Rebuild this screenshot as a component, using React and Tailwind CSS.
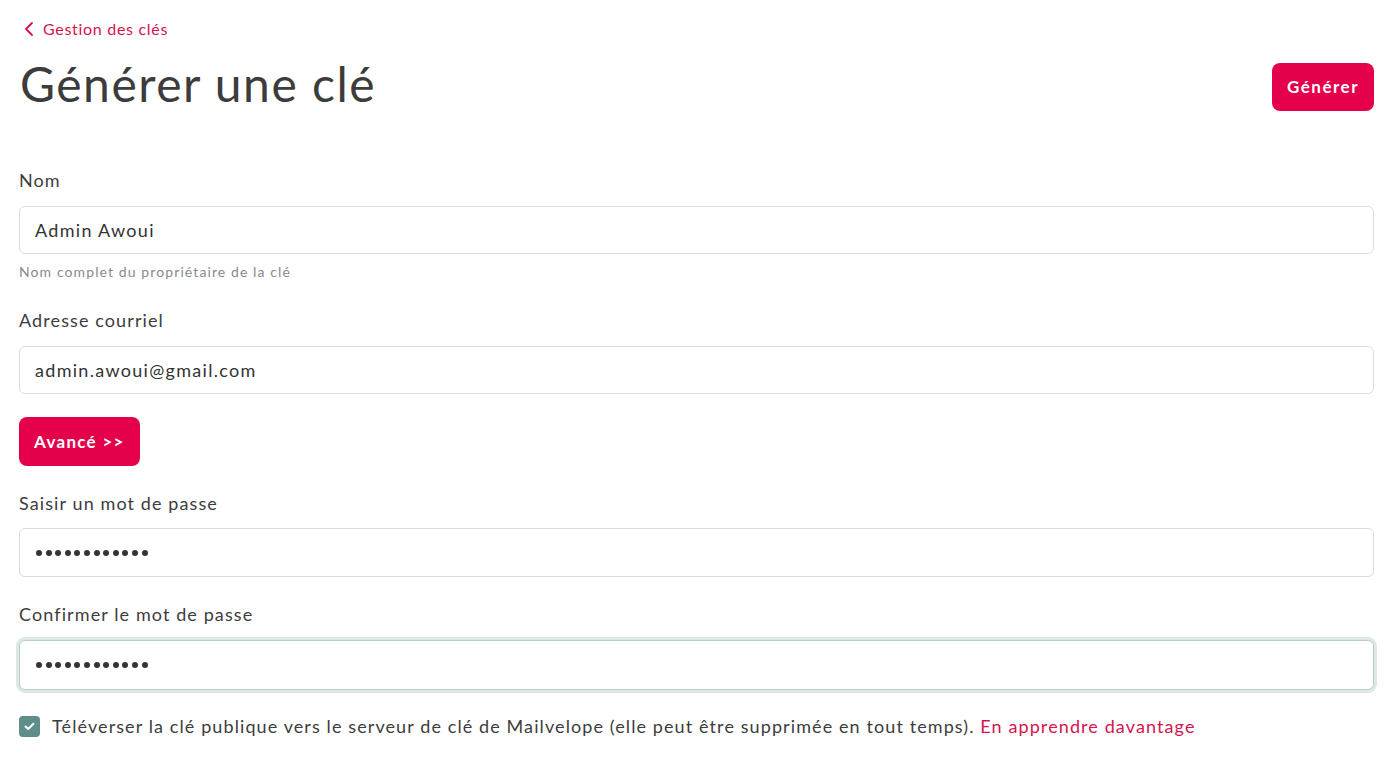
import React from "react";

const F = { fontFamily: "Lato, 'Noto Sans', sans-serif" };

function Label({ children, className = "" }) {
  return (
    <div className={"text-[18px] leading-[24px] text-[#3d3d3d] tracking-[1.1px] " + className}>{children}</div>
  );
}

function Input({ value, focus = false, password = false, className = "" }) {
  return (
    <div
      className={
        "h-[48px] rounded-[6px] bg-white flex items-center px-[15px] " +
        (focus
          ? "border border-[#b9cfcd] shadow-[0_0_0_3px_#dde8e6] "
          : "border border-[#dcdcdc] ") +
        className
      }
    >
      {password ? (
        <span className="flex gap-[3.6px] items-center pl-[1px]">
          {Array.from({ length: 12 }).map((_, i) => (
            <span key={i} className="w-[6px] h-[6px] rounded-full bg-[#333]" />
          ))}
        </span>
      ) : (
        <span className="text-[18px] text-[#333] tracking-[1.3px]">{value}</span>
      )}
    </div>
  );
}

export default function App() {
  return (
    <div style={F} className="min-h-[758px] bg-white pl-[19px] pr-[26px] pt-[18px]">
      <a className="flex items-center h-[22px] gap-[8px] text-[#d5134f] text-[16px] tracking-[0.7px] pl-[4px]">
        <svg width="12" height="16" viewBox="0 0 12 16" fill="none">
          <path d="M9 2 L3 8 L9 14" stroke="#d5134f" strokeWidth="1.8" strokeLinecap="round" strokeLinejoin="round" />
        </svg>
        <span>Gestion des clés</span>
      </a>
      <div className="mt-[23px] flex items-center justify-between h-[48px]">
        <h1 className="text-[48px] leading-[48px] text-[#3c3c3c] font-normal tracking-[1.5px] pl-[1px] -mt-[7px]">Générer une clé</h1>
        <button className="h-[48px] px-[15px] rounded-[8px] bg-[#e4004b] text-white text-[17px] font-bold tracking-[1.5px]">
          Générer
        </button>
      </div>

      <Label className="mt-[57px]">Nom</Label>
      <Input value="Admin Awoui" className="mt-[14px]" />
      <div className="mt-[8px] text-[14px] leading-[20px] text-[#8a8a8a] tracking-[1.1px]">Nom complet du propriétaire de la clé</div>

      <Label className="mt-[26px]">Adresse courriel</Label>
      <Input value="admin.awoui@gmail.com" className="mt-[14px]" />

      <button className="mt-[23px] h-[49px] px-[15px] rounded-[8px] bg-[#e4004b] text-white text-[17px] font-bold tracking-[1.3px]">
        Avancé &gt;&gt;
      </button>

      <Label className="mt-[25px]">Saisir un mot de passe</Label>
      <Input password className="mt-[13px] h-[49px]" />

      <Label className="mt-[25px]">Confirmer le mot de passe</Label>
      <Input password focus className="mt-[14px] h-[50px]" />

      <div className="mt-[24px] flex items-center gap-[12px]">
        <span className="w-[21px] h-[21px] rounded-[4px] bg-[#5e8d8a] flex items-center justify-center shrink-0">
          <svg width="11" height="9" viewBox="0 0 11 9" fill="none">
            <path d="M1.5 4.5 L4.2 7 L9.5 1.8" stroke="white" strokeWidth="2" strokeLinecap="round" strokeLinejoin="round" />
          </svg>
        </span>
        <span className="text-[18px] leading-[24px] text-[#3d3d3d] tracking-[1.1px]">
          Téléverser la clé publique vers le serveur de clé de Mailvelope (elle peut être supprimée en tout temps).{" "}
          <a className="text-[#d5134f]">En apprendre davantage</a>
        </span>
      </div>
    </div>
  );
}
